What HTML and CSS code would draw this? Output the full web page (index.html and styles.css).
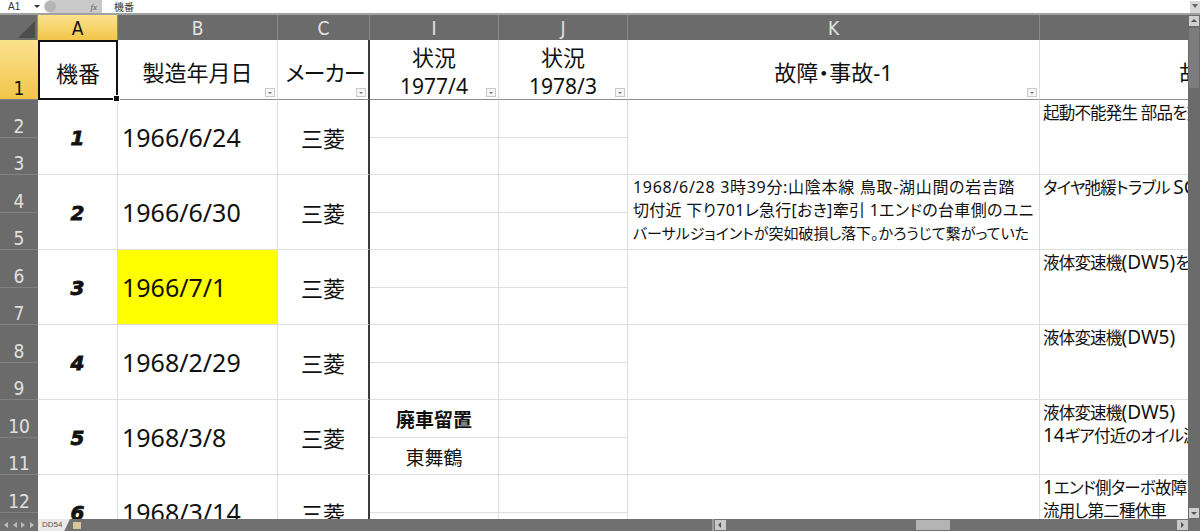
FILE: index.html
```html
<!DOCTYPE html>
<html lang="ja">
<head>
<meta charset="utf-8">
<title>DD54</title>
<link rel="stylesheet" href="styles.css">
</head>
<body>
<div class="app">
  <div class="formula-bar">
    <span class="namebox">A1</span>
    <span class="nb-arrow"></span>
    <div class="fx-pill"><span class="fx-knob"></span><span class="fx">fx</span></div>
    <span class="formula">機番</span>
    <span class="expand"></span>
  </div>
  <div class="sep"></div>
  <div class="main">
    <div class="sheet">
      <div class="grid">
        <!-- column headers -->
        <div class="c corner"><span class="tri"></span></div>
        <div class="c ch sel">A</div>
        <div class="c ch">B</div>
        <div class="c ch">C</div>
        <div class="c ch">I</div>
        <div class="c ch">J</div>
        <div class="c ch">K</div>
        <div class="c ch">L</div>

        <!-- row 1 -->
        <div class="c rh sel">1</div>
        <div class="c hd active">機番</div>
        <div class="c hd">製造年月日<span class="flt"></span></div>
        <div class="c hd thick narrowtxt">メーカー<span class="flt"></span></div>
        <div class="c hd two"><span>状況</span><span class="lat">1977/4</span><span class="flt"></span></div>
        <div class="c hd two"><span>状況</span><span class="lat">1978/3</span><span class="flt"></span></div>
        <div class="c hd">故障・事故-1<span class="flt"></span></div>
        <div class="c hd shifted">故障・事故-2<span class="flt"></span></div>

        <!-- rows 2-3 -->
        <div class="c rh">2</div>
        <div class="c num span2">1</div>
        <div class="c date span2">1966/6/24</div>
        <div class="c mk span2 thick">三菱</div>
        <div class="c st"></div>
        <div class="c st"></div>
        <div class="c tx span2"></div>
        <div class="c tl span2">起動不能発生 部品を交換</div>
        <div class="c rh">3</div>
        <div class="c st"></div>
        <div class="c st"></div>

        <!-- rows 4-5 -->
        <div class="c rh">4</div>
        <div class="c num span2">2</div>
        <div class="c date span2">1966/6/30</div>
        <div class="c mk span2 thick">三菱</div>
        <div class="c st"></div>
        <div class="c st"></div>
        <div class="c tx span2">
          <div class="ln l1">1968/6/28 3時39分:山陰本線 鳥取-湖山間の岩吉踏</div>
          <div class="ln l2">切付近 下り701レ急行[おき]牽引 1エンドの台車側のユニ</div>
          <div class="ln l3">バーサルジョイントが突如破損し落下。かろうじて繋がっていた</div>
        </div>
        <div class="c tl span2">タイヤ弛緩トラブル <span class="lt">SG</span></div>
        <div class="c rh">5</div>
        <div class="c st"></div>
        <div class="c st"></div>

        <!-- rows 6-7 -->
        <div class="c rh">6</div>
        <div class="c num span2">3</div>
        <div class="c date span2 yel">1966/7/1</div>
        <div class="c mk span2 thick">三菱</div>
        <div class="c st"></div>
        <div class="c st"></div>
        <div class="c tx span2"></div>
        <div class="c tl span2">液体変速機<span class="lt">(DW5)</span>を交換</div>
        <div class="c rh">7</div>
        <div class="c st"></div>
        <div class="c st"></div>

        <!-- rows 8-9 -->
        <div class="c rh">8</div>
        <div class="c num span2">4</div>
        <div class="c date span2">1968/2/29</div>
        <div class="c mk span2 thick">三菱</div>
        <div class="c st"></div>
        <div class="c st"></div>
        <div class="c tx span2"></div>
        <div class="c tl span2">液体変速機<span class="lt">(DW5)</span>　交換</div>
        <div class="c rh">9</div>
        <div class="c st"></div>
        <div class="c st"></div>

        <!-- rows 10-11 -->
        <div class="c rh">10</div>
        <div class="c num span2">5</div>
        <div class="c date span2">1968/3/8</div>
        <div class="c mk span2 thick">三菱</div>
        <div class="c st bold">廃車留置</div>
        <div class="c st"></div>
        <div class="c tx span2"></div>
        <div class="c tl span2">液体変速機<span class="lt">(DW5)</span>　不具合<br><span class="lt">14</span>ギア付近のオイル漏れ</div>
        <div class="c rh">11</div>
        <div class="c st">東舞鶴</div>
        <div class="c st"></div>

        <!-- rows 12-13 -->
        <div class="c rh">12</div>
        <div class="c num span2">6</div>
        <div class="c date span2">1968/3/14</div>
        <div class="c mk span2 thick">三菱</div>
        <div class="c st"></div>
        <div class="c st"></div>
        <div class="c tx span2"></div>
        <div class="c tl span2"><span class="lt">1</span>エンド側ターボ故障<br>流用し第二種休車</div>
        <div class="c rh">13</div>
        <div class="c st"></div>
        <div class="c st"></div>
      </div>
    </div>
    <div class="vscroll">
      <span class="vbtn up"></span>
      <span class="vthumb"></span>
      <span class="vtrack"></span>
      <span class="vbtn down"></span>
    </div>
  </div>
  <div class="bottom">
    <div class="tabnav"><span class="nv l"></span><span class="nv l"></span><span class="nv r"></span><span class="nv r"></span></div>
    <div class="tab">DD54</div>
    <div class="newtab"></div>
    <div class="bspace"></div>
    <div class="hscroll">
      <span class="hsplit"></span>
      <span class="hbtn left"></span>
      <span class="htrack"></span>
      <span class="hthumb"></span>
      <span class="htrack2"></span>
      <span class="hbtn right"></span>
    </div>
    <div class="bcorner"></div>
  </div>
</div>
</body>
</html>
```

FILE: styles.css
```css
html, body {
  margin: 0;
  padding: 0;
}
body {
  width: 1200px;
  height: 531px;
  overflow: hidden;
  background: #fff;
  font-family: "Noto Sans", "Noto Sans CJK JP", sans-serif;
  color: #111;
}
.app {
  display: flex;
  flex-direction: column;
  width: 1200px;
  height: 531px;
}

/* formula bar */
.formula-bar {
  height: 13px;
  flex-shrink: 0;
  display: flex;
  align-items: center;
  font-size: 10px;
  color: #333;
  background: #fff;
}
.namebox {
  margin-left: 8px;
  width: 22px;
  font-family: "Liberation Sans", sans-serif;
}
.nb-arrow {
  width: 0;
  height: 0;
  border-left: 3px solid transparent;
  border-right: 3px solid transparent;
  border-top: 3px solid #333;
  margin-left: 4px;
  margin-right: 4px;
}
.fx-pill {
  width: 58px;
  height: 13px;
  background: #c9c9c9;
  border-radius: 7px 0 0 7px;
  display: flex;
  align-items: center;
}
.fx-knob {
  width: 11px;
  height: 11px;
  margin-left: 1px;
  border-radius: 50%;
  background: #b5b5b5;
}
.fx {
  margin-left: auto;
  margin-right: 5px;
  font-family: "Liberation Serif", serif;
  font-style: italic;
  font-size: 9px;
  color: #555;
}
.formula {
  margin-left: 12px;
  font-family: "Noto Sans CJK JP", sans-serif;
  font-size: 10px;
}
.expand {
  margin-left: auto;
  width: 10px;
  height: 12px;
  background: #d8d8d8;
  position: relative;
}
.expand::after {
  content: "";
  position: absolute;
  left: 2px;
  top: 3px;
  border-left: 3px solid transparent;
  border-right: 3px solid transparent;
  border-top: 4px solid #666;
}
.sep {
  height: 2px;
  flex-shrink: 0;
  background: #a1a1a1;
}

/* main area */
.main {
  display: flex;
  width: 1200px;
  height: 504px;
  flex-shrink: 0;
}
.sheet {
  width: 1188px;
  flex: 0 0 1188px;
  height: 504px;
  overflow: hidden;
}
.grid {
  display: grid;
  grid-template-columns: 38px 80px 160px 92px 129px 129px 412px 412px;
  grid-template-rows: 25px 60px repeat(6, 38px 37px);
  width: max-content;
}
.c {
  box-sizing: border-box;
  border-right: 1px solid #dedede;
  border-bottom: 1px solid #dedede;
  display: flex;
  align-items: center;
  overflow: hidden;
  white-space: nowrap;
  min-width: 0;
}
.span2 {
  grid-row: span 2;
}

/* headers */
.corner {
  background: #6b6b6b;
  border-right: 1px solid #8c8c8c;
  border-bottom: none;
  justify-content: flex-end;
  align-items: flex-end;
}
.tri {
  width: 17px;
  height: 17px;
  margin: 0 2px 2px 0;
  background: #4d4d4d;
  clip-path: polygon(100% 0, 100% 100%, 0 100%);
}
.ch {
  background: #6b6b6b;
  color: #e2e2e2;
  font-family: "Liberation Sans Narrow", "DejaVu Sans Condensed", sans-serif;
  font-size: 19px;
  justify-content: center;
  border-right: 1px solid #8a8a8a;
  border-bottom: none;
}
.ch.sel,
.rh.sel {
  background: linear-gradient(#fbe28e, #f3c54a);
  color: #111;
}
.rh {
  background: #6b6b6b;
  color: #e0e0e0;
  font-family: "Liberation Sans Narrow", "DejaVu Sans Condensed", sans-serif;
  font-size: 19px;
  justify-content: center;
  align-items: flex-end;
  line-height: 20px;
  padding-bottom: 1px;
  border-right: none;
  border-bottom: 1px solid #808080;
}

/* row 1 */
.hd {
  position: relative;
  font-family: "Noto Sans", "Noto Sans CJK JP", sans-serif;
  font-size: 22px;
  justify-content: center;
  border-bottom: 1px solid #8d8d8d;
  padding-top: 3px;
  font-feature-settings: "palt";
}
.hd.narrowtxt {
  letter-spacing: -1px;
  padding-left: 4px;
}
.hd.shifted {
  padding-right: 14px;
}
.hd.two {
  flex-direction: column;
  line-height: 29px;
  padding-top: 4px;
}
.hd.two .lat {
  font-size: 21px;
}
.hd.active {
  border: 2px solid #111;
  overflow: visible;
  z-index: 2;
}
.hd.active::after {
  content: "";
  position: absolute;
  right: -4px;
  bottom: -4px;
  width: 5px;
  height: 5px;
  background: #111;
  border: 1px solid #fff;
}
.flt {
  position: absolute;
  right: 2px;
  bottom: 2px;
  width: 8px;
  height: 7px;
  border: 1px solid #c9c9c9;
  background: #f6f6f6;
}
.flt::after {
  content: "";
  position: absolute;
  left: 2px;
  top: 3px;
  border-left: 2px solid transparent;
  border-right: 2px solid transparent;
  border-top: 2px solid #777;
}
.thick {
  border-right: 2px solid #3a3a3a;
}

/* data */
.num {
  justify-content: center;
  font-family: "DejaVu Sans", sans-serif;
  font-weight: bold;
  font-style: italic;
  font-size: 20px;
  -webkit-text-stroke: 0.8px #111;
  padding-top: 1px;
}
.date {
  font-size: 25px;
  padding-left: 4px;
}
.yel {
  background: #ffff00;
}
.mk {
  justify-content: center;
  font-family: "Noto Sans CJK JP", sans-serif;
  font-size: 22px;
}
.st {
  justify-content: center;
  font-family: "Noto Sans CJK JP", sans-serif;
  font-size: 19px;
}
.st.bold {
  font-weight: bold;
}
.tx,
.tl {
  display: block;
  font-family: "Noto Sans", "Noto Sans CJK JP", sans-serif;
  font-size: 16px;
  line-height: 23px;
  font-feature-settings: "palt";
  padding: 1px 0 0 5px;
}
.tx .ln {
  height: 23px;
  overflow: hidden;
  white-space: nowrap;
}
.tx .l1 {
  font-size: 16px;
  letter-spacing: 0.7px;
}
.tx .l2 {
  font-size: 16px;
  letter-spacing: 0.3px;
}
.tx .l3 {
  font-size: 15px;
}
.tl {
  padding-left: 3px;
  font-size: 16.5px;
  letter-spacing: -0.8px;
}
.tl .lt {
  font-size: 19px;
  letter-spacing: 0;
}

/* vertical scrollbar */
.vscroll {
  width: 12px;
  min-width: 12px;
  flex: 0 0 12px;
  background: #6b6b6b;
  display: flex;
  flex-direction: column;
}
.vbtn {
  height: 10px;
  margin: 1px;
  background: #cfcfcf;
  position: relative;
}
.vbtn::after {
  content: "";
  position: absolute;
  left: 2px;
  border-left: 3px solid transparent;
  border-right: 3px solid transparent;
}
.vbtn.up::after {
  top: 3px;
  border-bottom: 3px solid #555;
}
.vbtn.down::after {
  top: 4px;
  border-top: 3px solid #555;
}
.vthumb {
  height: 60px;
  margin: 1px;
  background: #7c7c7c;
}
.vtrack {
  flex: 1;
}

/* bottom bar */
.bottom {
  height: 12px;
  flex-shrink: 0;
  display: flex;
  align-items: stretch;
  background: #707070;
}
.tabnav {
  width: 38px;
  display: flex;
  align-items: center;
  justify-content: space-around;
  padding: 0 2px;
  box-sizing: border-box;
}
.nv {
  width: 0;
  height: 0;
  border-top: 3px solid transparent;
  border-bottom: 3px solid transparent;
}
.nv.l {
  border-right: 4px solid #bdbdbd;
}
.nv.r {
  border-left: 4px solid #bdbdbd;
}
.tab {
  width: 32px;
  background: #e9e9e9;
  color: #555;
  font-family: "Liberation Sans", sans-serif;
  font-size: 8px;
  line-height: 12px;
  padding-left: 4px;
  box-sizing: border-box;
  clip-path: polygon(0 0, 100% 0, 82% 100%, 0 100%);
}
.newtab {
  width: 8px;
  height: 7px;
  margin: 3px 0 0 3px;
  background: #d6c69a;
}
.bspace {
  flex: 1;
}
.hscroll {
  width: 476px;
  display: flex;
  align-items: stretch;
}
.hsplit {
  width: 2px;
  background: #9a9a9a;
  margin-right: 1px;
}
.hbtn {
  width: 11px;
  margin: 1px 0;
  background: #c9c9c9;
  position: relative;
}
.hbtn::after {
  content: "";
  position: absolute;
  top: 2px;
  border-top: 3px solid transparent;
  border-bottom: 3px solid transparent;
}
.hbtn.left::after {
  left: 3px;
  border-right: 3px solid #555;
}
.hbtn.right::after {
  left: 4px;
  border-left: 3px solid #555;
}
.htrack {
  width: 190px;
}
.hthumb {
  width: 34px;
  margin: 1px 0;
  background: #b4b4b4;
}
.htrack2 {
  flex: 1;
}
.bcorner {
  width: 12px;
  background: #707070;
}
```
